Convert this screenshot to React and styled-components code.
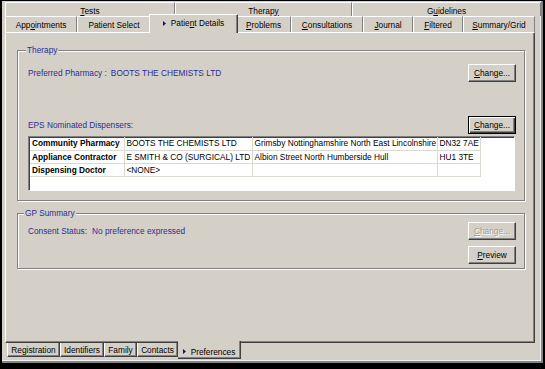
import React from 'react'
import styled, { createGlobalStyle, css } from 'styled-components'

const GlobalStyle = createGlobalStyle`
  html, body {
    margin: 0;
    padding: 0;
    background: #000;
  }
  body {
    font-family: "Liberation Sans", Arial, sans-serif;
    font-size: 8.3px;
    color: #000;
  }
  * { box-sizing: border-box; }
`

const navy = '#2d2d96'
const face = '#d4d0c8'

export default function App () {
  return (
    <>
      <GlobalStyle />
      <Screen>
        <Window>
          <TabRow $h={14}>
            <Tab $w={170} $pt={2}><span><u>T</u>ests</span></Tab>
            <Tab $w={177} $pt={2}><span>Therap<u>y</u></span></Tab>
            <Tab $pt={2}><span>G<u>u</u>idelines</span></Tab>
          </TabRow>
          <TabRow $h={16} $pr={6}>
            <Tab $w={72}><span>App<u>o</u>intments</span></Tab>
            <Tab $w={74}><span>Patient Select</span></Tab>
            <Tab $w={85} $active><Marker /><span>Patie<u>n</u>t Details</span></Tab>
            <Tab $w={55}><span><u>P</u>roblems</span></Tab>
            <Tab $w={72}><span><u>C</u>onsultations</span></Tab>
            <Tab $w={50}><span><u>J</u>ournal</span></Tab>
            <Tab $w={50}><span><u>F</u>iltered</span></Tab>
            <Tab $w={72}><span><u>S</u>ummary/Grid</span></Tab>
          </TabRow>

          <Page>
            <Group $pad='9px 8px 9px 10px'>
              <Legend $shift={-2}>Therapy</Legend>
              <Line>
                <Field>
                  <span>Preferred Pharmacy :</span>
                  <span>BOOTS THE CHEMISTS LTD</span>
                </Field>
                <Button><u>C</u>hange...</Button>
              </Line>
              <Line $top={34}>
                <Field>EPS Nominated Dispensers:</Field>
                <Button $focused><u>C</u>hange...</Button>
              </Line>
              <ListBox>
                <Grid>
                  <colgroup>
                    <col style={{ width: 94 }} />
                    <col style={{ width: 128 }} />
                    <col style={{ width: 185 }} />
                    <col style={{ width: 43 }} />
                  </colgroup>
                  <tbody>
                    {dispensers.map(row => (
                      <tr key={row[0]}>
                        <Cell $bold>{row[0]}</Cell>
                        <Cell>{row[1]}</Cell>
                        <Cell>{row[2]}</Cell>
                        <Cell>{row[3]}</Cell>
                      </tr>
                    ))}
                  </tbody>
                </Grid>
              </ListBox>
            </Group>

            <Group $top={7} $pad='4px 8px 4px 10px'>
              <Legend $shift={-4}>GP Summary</Legend>
              <Summary>
                <Field $gap={5}>
                  <span>Consent Status:</span>
                  <span>No preference expressed</span>
                </Field>
                <Button disabled><u>C</u>hange...</Button>
                <Button $col={2}><u>P</u>review</Button>
              </Summary>
            </Group>
          </Page>

          <BottomBar>
            <BottomTab $w={53}>Registration</BottomTab>
            <BottomTab $w={44}>Identifiers</BottomTab>
            <BottomTab $w={33}>Family</BottomTab>
            <BottomTab $w={41}>Contacts</BottomTab>
            <BottomTab $w={63} $active><Marker /><span>Preferences</span></BottomTab>
          </BottomBar>
        </Window>
      </Screen>
    </>
  )
}

const dispensers = [
  ['Community Pharmacy', 'BOOTS THE CHEMISTS LTD', 'Grimsby Nottinghamshire North East Lincolnshire', 'DN32 7AE'],
  ['Appliance Contractor', 'E SMITH & CO (SURGICAL) LTD', 'Albion Street North Humberside Hull', 'HU1 3TE'],
  ['Dispensing Doctor', '<NONE>', '', '']
]

function Marker () {
  return (
    <Arrow width='3' height='5' viewBox='0 0 3 5'>
      <polygon points='0,0 3,2.5 0,5' fill='#14146e' />
    </Arrow>
  )
}

const Screen = styled.div`
  width: 545px;
  height: 369px;
  background: #000;
  padding: 1px 2px 6px 2px;
`

const Window = styled.div`
  height: 100%;
  display: flex;
  flex-direction: column;
  background: ${face};
  padding: 1px 0 0 3px;
  border-right: 2px solid #858585;
  border-bottom: 2px solid #858585;
  box-shadow: inset -1px -1px 0 #f2f2f2;
`

const TabRow = styled.div`
  display: flex;
  height: ${p => p.$h}px;
  flex: 0 0 ${p => p.$h}px;
  padding-right: ${p => p.$pr || 0}px;
`

const Tab = styled.div`
  flex: ${p => (p.$w ? `0 0 ${p.$w}px` : '1 1 auto')};
  display: flex;
  align-items: center;
  justify-content: center;
  gap: 5px;
  padding-top: ${p => p.$pt || 1}px;
  border-top: 1px solid #fff;
  border-left: 1px solid #fff;
  border-right: 1px solid #808080;
  white-space: nowrap;
  line-height: 10px;

  ${p => p.$active && css`
    position: relative;
    z-index: 1;
    flex-basis: ${p.$w + 4}px;
    margin: -2px -2px -1px;
    padding: 0 0 2px;
    background: ${face};
    border-right: 1px solid #404040;
    box-shadow: inset -1px 0 0 #808080;
  `}
`

const Arrow = styled.svg`
  display: block;
  flex: none;
`

const Page = styled.div`
  flex: 1;
  margin-right: 6px;
  padding: 12px 9px 0 11px;
  border-top: 1px solid #fff;
  border-left: 1px solid #fff;
  border-right: 1px solid #404040;
  border-bottom: 1px solid #404040;
  box-shadow: inset -1px -1px 0 #808080;
`

const Group = styled.fieldset`
  margin: ${p => p.$top || 0}px 0 0;
  padding: ${p => p.$pad};
  min-width: 0;
  border: 1px solid #808080;
  box-shadow: 1px 1px 0 #fff, inset 1px 1px 0 #fff;
`

const Legend = styled.legend`
  margin-left: ${p => p.$shift}px;
  padding: 0 1px;
  line-height: 10px;
  color: ${navy};
  background: ${face};
`

const Line = styled.div`
  display: flex;
  align-items: center;
  justify-content: space-between;
  height: 18px;
  margin-top: ${p => p.$top || 0}px;
`

const Field = styled.div`
  display: flex;
  gap: ${p => p.$gap || 4}px;
  color: ${navy};
  white-space: nowrap;
  line-height: 10px;
`

const Button = styled.button`
  width: 48px;
  height: 18px;
  padding: 0;
  font: inherit;
  line-height: 10px;
  color: #000;
  background: ${face};
  border: 1px solid;
  border-color: #fff #404040 #404040 #fff;
  box-shadow: inset -1px -1px 0 #808080;
  grid-column: ${p => p.$col || 'auto'};

  ${p => p.$focused && css`
    border-color: #000;
    box-shadow: inset 1px 1px 0 #fff, inset -1px -1px 0 #404040, inset -2px -2px 0 #808080;
  `}

  &:disabled {
    color: #a09c96;
    text-shadow: 1px 1px 0 #fff;
  }
`

const ListBox = styled.div`
  height: 55px;
  margin: 2px 1px 0 0;
  padding: 0 0 0 1px;
  background: #fff;
  border: 1px solid;
  border-color: #808080 #fff #fff #808080;
  box-shadow: inset 1px 1px 0 #404040;
  overflow: hidden;
`

const Grid = styled.table`
  width: 450px;
  table-layout: fixed;
  border-collapse: collapse;
`

const Cell = styled.td`
  height: 13px;
  padding: 0 2px;
  line-height: 12px;
  white-space: nowrap;
  overflow: hidden;
  border-right: 1px solid #dcd9d3;
  border-bottom: 1px solid #dcd9d3;
  font-weight: ${p => (p.$bold ? 700 : 400)};
`

const Summary = styled.div`
  display: grid;
  grid-template-columns: 1fr 48px;
  row-gap: 6px;
  align-items: center;
`

const BottomBar = styled.div`
  flex: 0 0 18px;
  display: flex;
  align-items: flex-start;
  padding-left: 2px;
`

const BottomTab = styled.div`
  flex: 0 0 ${p => p.$w}px;
  height: 14px;
  display: flex;
  align-items: center;
  justify-content: center;
  gap: 5px;
  line-height: 10px;
  white-space: nowrap;
  border-left: 1px solid #fff;
  border-right: 1px solid #404040;
  border-bottom: 1px solid #404040;
  box-shadow: inset -1px -1px 0 #808080;

  ${p => p.$active && css`
    position: relative;
    z-index: 1;
    height: 18px;
    margin-top: -2px;
    padding-top: 4px;
    border-left: none;
    background: ${face};
  `}
`
